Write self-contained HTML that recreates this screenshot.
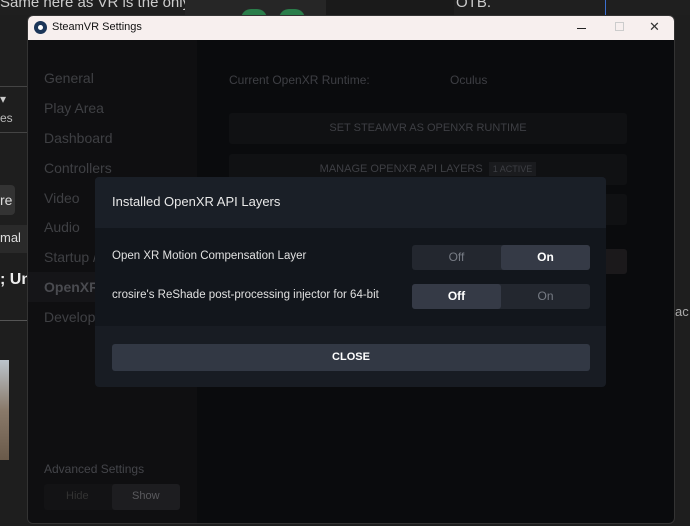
<!DOCTYPE html>
<html><head><style>
*{margin:0;padding:0;box-sizing:border-box}
body{width:690px;height:526px;background:#1e1e1e;position:relative;overflow:hidden;font-family:"Liberation Sans","DejaVu Sans",sans-serif}
.a{position:absolute}
.side{color:#3f4044;font-size:14px}
</style></head><body>
<div class="a" style="left:0;top:0;width:690px;height:15px;background:#1f1f1f"></div>
<div class="a" style="left:0;top:-6px;color:#ccc;font-size:15px">Same here as VR is the only wa</div>
<div class="a" style="left:185px;top:0;width:142px;height:15px;background:#262626"></div>
<div class="a" style="left:326px;top:0;width:128px;height:15px;background:#1a1a1a"></div>
<div class="a" style="left:241px;top:9px;width:26px;height:10px;border-radius:13px 13px 0 0;background:#2a7d4a"></div>
<div class="a" style="left:279px;top:9px;width:26px;height:10px;border-radius:13px 13px 0 0;background:#2a7d4a"></div>
<div class="a" style="left:456px;top:-6px;color:#ccc;font-size:15px">OTB.</div>
<div class="a" style="left:605px;top:0;width:1px;height:15px;background:#3b6fd0"></div>
<div class="a" style="left:0;top:86px;width:27px;height:1px;background:#444"></div>
<div class="a" style="left:0;top:92px;color:#ccc;font-size:12px">▾</div>
<div class="a" style="left:0;top:111px;color:#bbb;font-size:12px">es</div>
<div class="a" style="left:0;top:132px;width:27px;height:1px;background:#444"></div>
<div class="a" style="left:0;top:185px;width:15px;height:30px;background:#333;border-radius:0 4px 4px 0"></div>
<div class="a" style="left:0;top:192px;color:#ddd;font-size:14px">re</div>
<div class="a" style="left:0;top:225px;width:27px;height:28px;background:#2a2a2a"></div>
<div class="a" style="left:0;top:230px;color:#ddd;font-size:13px">mal</div>
<div class="a" style="left:0;top:271px;color:#eee;font-size:16px;font-weight:bold">; Un</div>
<div class="a" style="left:0;top:320px;width:27px;height:1px;background:#555"></div>
<div class="a" style="left:0;top:360px;width:9px;height:100px;background:linear-gradient(#bcc4cc,#8a7a6a,#6a5a4a)"></div>
<div class="a" style="left:675px;top:304px;color:#aaa;font-size:13px">ac</div>

<div class="a" style="left:27px;top:15px;width:648px;height:509px;background:#0a0b0d;border:1px solid #333;border-radius:6px;overflow:hidden">
  <div class="a" style="left:0;top:0;width:648px;height:24px;background:#f7efee"></div>
  <div class="a" style="left:6px;top:5px;width:13px;height:13px;border-radius:50%;background:#1b3558"></div>
  <div class="a" style="left:10px;top:9px;width:5px;height:5px;border-radius:50%;background:#fff"></div>
  <div class="a" style="left:24px;top:5px;font-size:11px;color:#111">SteamVR Settings</div>
  <div class="a" style="left:549px;top:12px;width:9px;height:1px;background:#222"></div>
  <div class="a" style="left:587px;top:6px;width:9px;height:9px;border:1px solid #ccc"></div>
  <div class="a" style="left:621px;top:3px;font-size:13px;color:#333">✕</div>
  <div class="a" style="left:0;top:24px;width:169px;height:485px;background:#0f0f11"></div>
  <div class="a" style="left:0;top:256px;width:169px;height:30px;background:#151518"></div>
  <div class="a side" style="left:16px;top:54px">General</div>
  <div class="a side" style="left:16px;top:84px">Play Area</div>
  <div class="a side" style="left:16px;top:114px">Dashboard</div>
  <div class="a side" style="left:16px;top:144px">Controllers</div>
  <div class="a side" style="left:16px;top:174px">Video</div>
  <div class="a side" style="left:16px;top:203px">Audio</div>
  <div class="a side" style="left:16px;top:233px">Startup / Shutdown</div>
  <div class="a side" style="left:16px;top:263px;font-weight:bold;color:#4a4b50">OpenXR</div>
  <div class="a side" style="left:16px;top:293px">Developer</div>
  <div class="a" style="left:16px;top:446px;font-size:12px;color:#44454a">Advanced Settings</div>
  <div class="a" style="left:16px;top:468px;width:136px;height:26px;background:#131315;border-radius:3px"></div>
  <div class="a" style="left:84px;top:468px;width:68px;height:26px;background:#1d1d20;border-radius:3px"></div>
  <div class="a" style="left:38px;top:474px;font-size:11px;color:#333">Hide</div>
  <div class="a" style="left:104px;top:474px;font-size:11px;color:#5a5a5e">Show</div>
  <div class="a" style="left:201px;top:57px;font-size:12px;color:#3e3f44">Current OpenXR Runtime:</div>
  <div class="a" style="left:422px;top:57px;font-size:12px;color:#3e3f44">Oculus</div>
  <div class="a" style="left:201px;top:97px;width:398px;height:31px;background:#101113;border-radius:3px;text-align:center;line-height:31px;font-size:11px;color:#3e3f44">SET STEAMVR AS OPENXR RUNTIME</div>
  <div class="a" style="left:201px;top:138px;width:398px;height:31px;background:#101113;border-radius:3px;text-align:center;line-height:31px;font-size:11px;color:#3e3f44">MANAGE OPENXR API LAYERS &nbsp;<span style="background:#1a1b1e;font-size:9px;padding:2px 4px">1 ACTIVE</span></div>
  <div class="a" style="left:201px;top:178px;width:398px;height:31px;background:#101113;border-radius:3px"></div>
  <div class="a" style="left:201px;top:233px;width:398px;height:25px;background:#1b191b;border-radius:3px"></div>
</div>

<div class="a" style="left:95px;top:177px;width:511px;height:210px;background:#181c23;border-radius:4px;overflow:hidden">
  <div class="a" style="left:0;top:0;width:511px;height:51px;background:#1a1f27"></div>
  <div class="a" style="left:17px;top:17px;font-size:13px;color:#e8e8e8">Installed OpenXR API Layers</div>
  <div class="a" style="left:0;top:51px;width:511px;height:98px;background:#12161c"></div>
  <div class="a" style="left:17px;top:73px;font-size:11.5px;color:#e0e0e0">Open XR Motion Compensation Layer</div>
  <div class="a" style="left:17px;top:112px;font-size:11.5px;color:#e0e0e0">crosire's ReShade post-processing injector for 64-bit</div>
  <div class="a" style="left:317px;top:68px;width:178px;height:25px;background:#23272f;border-radius:3px"></div>
  <div class="a" style="left:406px;top:68px;width:89px;height:25px;background:#353a46;border-radius:3px"></div>
  <div class="a" style="left:317px;top:73px;width:89px;text-align:center;font-size:12px;color:#777c85">Off</div>
  <div class="a" style="left:406px;top:73px;width:89px;text-align:center;font-size:12px;color:#fff;font-weight:bold">On</div>
  <div class="a" style="left:317px;top:107px;width:178px;height:25px;background:#23272f;border-radius:3px"></div>
  <div class="a" style="left:317px;top:107px;width:89px;height:25px;background:#353a46;border-radius:3px"></div>
  <div class="a" style="left:317px;top:112px;width:89px;text-align:center;font-size:12px;color:#fff;font-weight:bold">Off</div>
  <div class="a" style="left:406px;top:112px;width:89px;text-align:center;font-size:12px;color:#777c85">On</div>
  <div class="a" style="left:17px;top:167px;width:478px;height:27px;background:#323844;border-radius:3px;text-align:center;line-height:27px;font-size:11px;color:#fff;font-weight:bold">CLOSE</div>
</div>
</body></html>
